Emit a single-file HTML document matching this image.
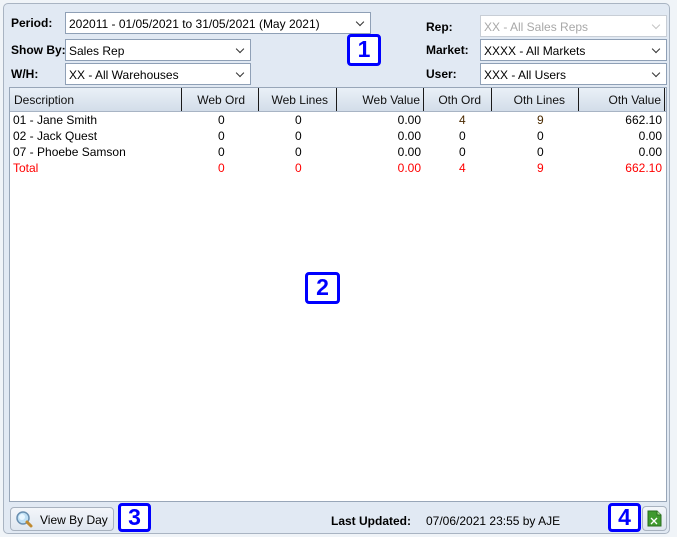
<!DOCTYPE html>
<html><head><meta charset="utf-8"><style>
*{box-sizing:border-box;margin:0;padding:0}
body{width:677px;height:537px;background:#f0f4f8;font-family:"Liberation Sans",Arial,sans-serif;font-size:12px;color:#000;position:relative;overflow:hidden}
.panel{position:absolute;left:3px;top:3px;width:667px;height:531px;background:#e1e9f3;border:1px solid #a9b4c2;border-radius:5px}
.a{position:absolute}
.lbl{font-weight:bold;font-size:12px}
.sel{position:absolute;height:22px;background:#fff;border:1px solid #8fa0b6;font-size:12px;padding:4px 0 0 3px;white-space:nowrap}
.sel::after{content:"";position:absolute;right:7px;top:6px;width:5px;height:5px;border-right:1px solid #333;border-bottom:1px solid #333;transform:rotate(45deg)}
.sel.dis{color:#a8a8a8;border-color:#c8ced6}
.sel.dis::after{border-color:#c4c4c4}
.grid{position:absolute;left:9px;top:87px;width:658px;height:415px;background:#fff;border:1px solid #98a6b8}
.hdr{position:absolute;left:0;top:0;height:24px;width:656px;background:linear-gradient(#eaf0f7,#d3dde9);border-bottom:1px solid #a8b4c4}
.hc{position:absolute;top:0;height:23px;padding-top:5px;font-size:12px;border-right:1px solid #1a1a1a;color:#111}
.row{position:absolute;left:0;height:16px;width:656px;font-size:12px}
.c{position:absolute;top:1px}
.red{color:#ff0000}
.badge{position:absolute;border:3px solid #0000ff;border-radius:4px;background:#fff;color:#0000ff;font-weight:bold;font-size:23px;text-align:center;line-height:25px}
.btn{position:absolute;border:1px solid #a8b2bf;border-radius:4px;background:linear-gradient(#f3f6fa,#dfe6ef)}
</style></head><body>
<div class="panel"></div>
<div class="a lbl" style="left:11px;top:16px">Period:</div>
<div class="sel" style="left:65px;top:12px;width:306px">202011 - 01/05/2021 to 31/05/2021 (May 2021)</div>
<div class="a lbl" style="left:11px;top:43px">Show By:</div>
<div class="sel" style="left:65px;top:39px;width:186px">Sales Rep</div>
<div class="a lbl" style="left:11px;top:67px">W/H:</div>
<div class="sel" style="left:65px;top:63px;width:186px">XX - All Warehouses</div>
<div class="a lbl" style="left:426px;top:20px">Rep:</div>
<div class="sel dis" style="left:480px;top:15px;width:187px">XX - All Sales Reps</div>
<div class="a lbl" style="left:426px;top:43px">Market:</div>
<div class="sel" style="left:480px;top:39px;width:187px">XXXX - All Markets</div>
<div class="a lbl" style="left:426px;top:67px">User:</div>
<div class="sel" style="left:480px;top:63px;width:187px">XXX - All Users</div>
<div class="badge" style="left:347px;top:34px;width:34px;height:32px">1</div>

<div class="grid">
<div class="hdr">
<div class="hc" style="left:0;width:172px;padding-left:4px">Description</div>
<div class="hc" style="left:172px;width:77px;text-align:right;padding-right:13px">Web Ord</div>
<div class="hc" style="left:249px;width:78px;text-align:right;padding-right:8px">Web Lines</div>
<div class="hc" style="left:327px;width:87px;text-align:right;padding-right:3px">Web Value</div>
<div class="hc" style="left:414px;width:68px;text-align:right;padding-right:10px">Oth Ord</div>
<div class="hc" style="left:482px;width:87px;text-align:right;padding-right:13px">Oth Lines</div>
<div class="hc" style="left:569px;width:86px;text-align:right;padding-right:3px">Oth Value</div>
</div>
<div class="row" style="top:24px"><span class="c" style="left:3px">01 - Jane Smith</span><span class="c" style="left:208px">0</span><span class="c" style="left:285px">0</span><span class="c" style="right:245px">0.00</span><span class="c" style="left:449px;color:#4a2a00">4</span><span class="c" style="left:527px;color:#4a2a00">9</span><span class="c" style="right:4px">662.10</span></div>
<div class="row" style="top:40px"><span class="c" style="left:3px">02 - Jack Quest</span><span class="c" style="left:208px">0</span><span class="c" style="left:285px">0</span><span class="c" style="right:245px">0.00</span><span class="c" style="left:449px">0</span><span class="c" style="left:527px">0</span><span class="c" style="right:4px">0.00</span></div>
<div class="row" style="top:56px"><span class="c" style="left:3px">07 - Phoebe Samson</span><span class="c" style="left:208px">0</span><span class="c" style="left:285px">0</span><span class="c" style="right:245px">0.00</span><span class="c" style="left:449px">0</span><span class="c" style="left:527px">0</span><span class="c" style="right:4px">0.00</span></div>
<div class="row red" style="top:72px"><span class="c" style="left:3px">Total</span><span class="c" style="left:208px">0</span><span class="c" style="left:285px">0</span><span class="c" style="right:245px">0.00</span><span class="c" style="left:449px">4</span><span class="c" style="left:527px">9</span><span class="c" style="right:4px">662.10</span></div>
</div>
<div class="badge" style="left:305px;top:272px;width:35px;height:32px">2</div>

<div class="btn" style="left:10px;top:507px;width:104px;height:24px"></div>
<svg class="a" style="left:15px;top:510px" width="20" height="20" viewBox="0 0 20 20"><circle cx="8" cy="8" r="6" fill="#bfe0f5" stroke="#6a8fb0" stroke-width="1.5"/><circle cx="7" cy="7" r="3" fill="#e8f6ff"/><path d="M12 12 L16 16" stroke="#c08a30" stroke-width="3" stroke-linecap="round"/></svg>
<div class="a" style="left:40px;top:513px;font-size:12px">View By Day</div>
<div class="badge" style="left:118px;top:503px;width:33px;height:29px;line-height:23px">3</div>
<div class="a lbl" style="left:331px;top:514px">Last Updated:</div>
<div class="a" style="left:426px;top:514px;font-size:12px">07/06/2021 23:55 by AJE</div>
<div class="badge" style="left:608px;top:503px;width:33px;height:29px;line-height:23px">4</div>
<div class="btn" style="left:642px;top:506px;width:25px;height:25px"></div>
<svg class="a" style="left:647px;top:510px" width="15" height="17" viewBox="0 0 15 17"><path d="M1 1 H10 L14 5 V16 H1 Z" fill="#3f9a2e" stroke="#2a6e1f"/><path d="M10 1 V5 H14" fill="#a8dc90" stroke="#2a6e1f"/><path d="M4 8 L10 14 M10 8 L4 14" stroke="#fff" stroke-width="1.3"/></svg>
</body></html>
